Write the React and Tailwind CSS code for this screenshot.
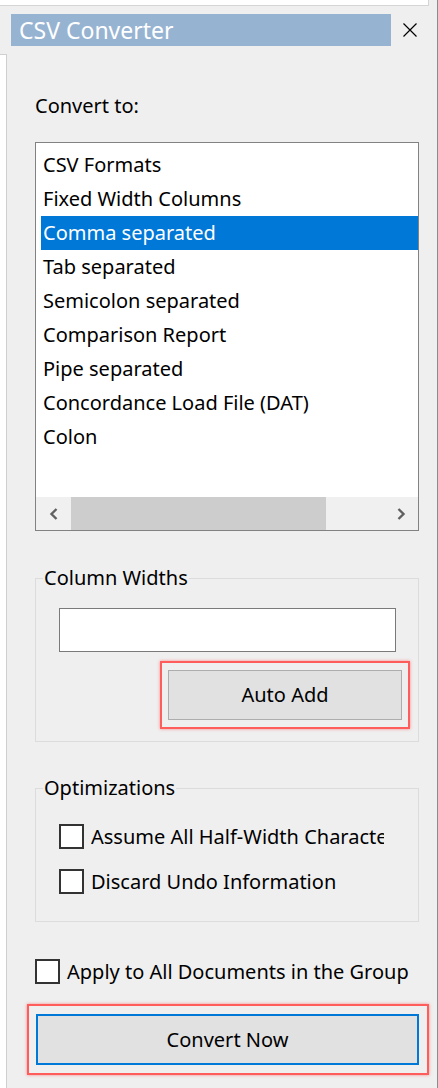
import React, { useState } from 'react';

const formats = [
  "CSV Formats",
  "Fixed Width Columns",
  "Comma separated",
  "Tab separated",
  "Semicolon separated",
  "Comparison Report",
  "Pipe separated",
  "Concordance Load File (DAT)",
  "Colon",
];

const Checkbox = ({ checked, onChange }) => (
  <button
    onClick={onChange}
    className="w-[25px] h-[25px] shrink-0 border-2 border-[#333333] bg-white flex items-center justify-center"
  >
    {checked && (
      <svg width="16" height="16" viewBox="0 0 16 16">
        <path d="M2 8 L6 12 L14 3" fill="none" stroke="#000" strokeWidth="2" />
      </svg>
    )}
  </button>
);

const App = () => {
  const [selected, setSelected] = useState(2);
  const [halfWidth, setHalfWidth] = useState(false);
  const [discardUndo, setDiscardUndo] = useState(false);
  const [applyAll, setApplyAll] = useState(false);
  const [widths, setWidths] = useState('');

  return (
    <div className="w-[438px] h-[1088px] bg-[#efefef] flex flex-col border-r border-[#8c8c8c] overflow-hidden text-[20px] text-black font-['Noto_Sans',sans-serif]">
      {/* top edge */}
      <div className="h-[6px] flex shrink-0">
        <div className="w-[429px] bg-white border-b border-r border-[#d5d5d5]" />
      </div>

      {/* title */}
      <div className="flex items-center pt-[8px] pb-[8px] shrink-0">
        <div className="ml-[11px] w-[380px] h-[32px] bg-[#97b3d2] pl-[8px] text-white text-[23px] leading-[32px]">
          CSV Converter
        </div>
        <button className="ml-[12px] w-[14px] h-[14px]">
          <svg width="14" height="14" viewBox="0 0 14 14">
            <path d="M0.5 0.5 L13.5 13.5 M13.5 0.5 L0.5 13.5" stroke="#000" strokeWidth="1.2" />
          </svg>
        </button>
      </div>

      <div className="flex flex-1 min-h-0">
        <div className="w-[7px] shrink-0 bg-white border-t border-r border-[#d0d0d0]" />

        <div className="flex-1 pl-[28px] flex flex-col">
          <div className="mt-[40px] leading-[24px]">Convert to:</div>

          {/* list box */}
          <div className="mt-[24px] w-[384px] h-[389px] border border-[#828282] bg-white flex flex-col">
            <div className="flex-1 pt-[5px] pl-[5px] overflow-hidden">
              {formats.map((f, i) => (
                <div
                  key={f}
                  onClick={() => setSelected(i)}
                  className={`h-[34px] leading-[34px] pl-[2px] whitespace-nowrap ${
                    i === selected ? 'bg-[#0078d7] text-white' : ''
                  }`}
                >
                  {f}
                </div>
              ))}
            </div>
            <div className="h-[33px] bg-[#f0f0f0] flex shrink-0">
              <div className="w-[35px] flex items-center justify-center">
                <svg width="10" height="12" viewBox="0 0 10 12">
                  <path d="M7.5 1 L2.5 6 L7.5 11" fill="none" stroke="#606060" strokeWidth="2.4" />
                </svg>
              </div>
              <div className="w-[255px] bg-[#cdcdcd]" />
              <div className="flex-1" />
              <div className="w-[35px] flex items-center justify-center">
                <svg width="10" height="12" viewBox="0 0 10 12">
                  <path d="M2.5 1 L7.5 6 L2.5 11" fill="none" stroke="#606060" strokeWidth="2.4" />
                </svg>
              </div>
            </div>
          </div>

          {/* column widths */}
          <fieldset className="mt-[35px] w-[384px] border border-[#dcdcdc] pb-[12px]">
            <legend className="ml-[7px] px-[1px] leading-[24px]">Column Widths</legend>
            <input
              value={widths}
              onChange={(e) => setWidths(e.target.value)}
              className="block mt-[18px] ml-[23px] w-[337px] h-[44px] border border-[#7a7a7a] bg-white px-2 outline-none"
            />
            <div className="mt-[9px] ml-[124px] w-[250px] h-[68px] border-2 border-[#ff5c5c] shadow-[0_0_3px_rgba(255,70,70,0.6)] pl-[6px] pr-[6px] py-[7px]">
              <button className="w-full h-full bg-[#e1e1e1] border border-[#adadad]">Auto Add</button>
            </div>
          </fieldset>

          {/* optimizations */}
          <fieldset className="mt-[34px] w-[384px] border border-[#dcdcdc] pb-[27px]">
            <legend className="ml-[7px] px-[1px] leading-[24px]">Optimizations</legend>
            <div className="mt-[24px] ml-[23px] flex items-center h-[25px]">
              <Checkbox checked={halfWidth} onChange={() => setHalfWidth(!halfWidth)} />
              <span className="ml-[7px] w-[293px] overflow-hidden whitespace-nowrap">
                Assume All Half-Width Characters
              </span>
            </div>
            <div className="mt-[20px] ml-[23px] flex items-center h-[25px]">
              <Checkbox checked={discardUndo} onChange={() => setDiscardUndo(!discardUndo)} />
              <span className="ml-[7px] whitespace-nowrap">Discard Undo Information</span>
            </div>
          </fieldset>

          <div className="mt-[37px] flex items-center h-[25px]">
            <Checkbox checked={applyAll} onChange={() => setApplyAll(!applyAll)} />
            <span className="ml-[7px] whitespace-nowrap">Apply to All Documents in the Group</span>
          </div>

          <div className="mt-[20px] -ml-[8px] w-[402px] h-[71px] border-2 border-[#ff5c5c] shadow-[0_0_3px_rgba(255,70,70,0.6)] pl-[7px] pr-[8px] py-[8px]">
            <button className="w-full h-full bg-[#e1e1e1] border-2 border-[#0078d7]">Convert Now</button>
          </div>
        </div>
      </div>
    </div>
  );
};

export default App;
